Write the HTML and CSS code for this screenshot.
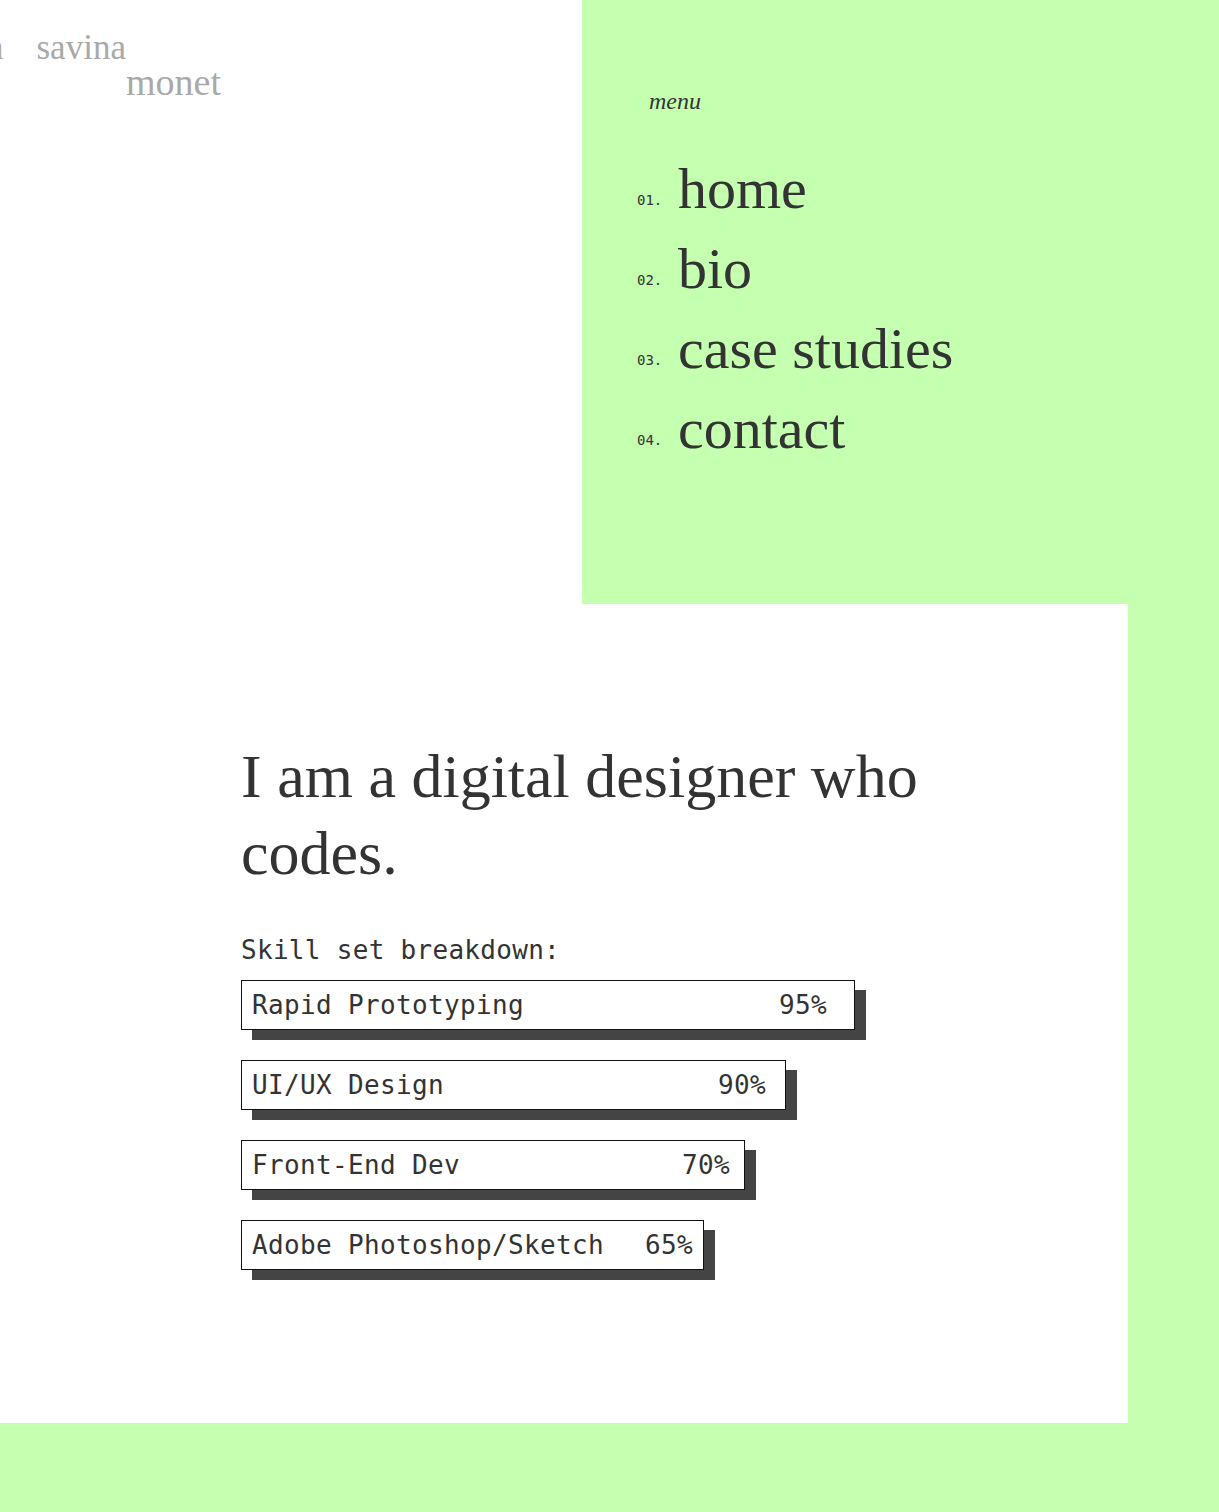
FILE: index.html
```html
<!DOCTYPE html>
<html lang="en">
<head>
<meta charset="utf-8">
<title>savina monet</title>
<link rel="stylesheet" href="styles.css">
</head>
<body>
<div class="page">
  <header class="top">
    <div class="brand">
      <div class="logo">
        <span class="logo-cut">n</span><span class="logo-first">savina</span>
        <span class="logo-last">monet</span>
      </div>
    </div>
    <nav class="menu">
      <div class="menu-label">menu</div>
      <ul class="menu-list">
        <li class="menu-item"><span class="num">01.</span><a class="link" href="#">home</a></li>
        <li class="menu-item"><span class="num">02.</span><a class="link" href="#">bio</a></li>
        <li class="menu-item"><span class="num">03.</span><a class="link" href="#">case studies</a></li>
        <li class="menu-item"><span class="num">04.</span><a class="link" href="#">contact</a></li>
      </ul>
    </nav>
  </header>
  <main class="about">
    <h1 class="headline">I am a digital designer who codes.</h1>
    <p class="skills-title">Skill set breakdown:</p>
    <ul class="skills">
      <li class="bar" style="width:614px;padding-right:27px"><span>Rapid Prototyping</span><span>95%</span></li>
      <li class="bar" style="width:545px;padding-right:19px"><span>UI/UX Design</span><span>90%</span></li>
      <li class="bar" style="width:504px;padding-right:14px"><span>Front-End Dev</span><span>70%</span></li>
      <li class="bar" style="width:463px;padding-right:10px"><span>Adobe Photoshop/Sketch</span><span>65%</span></li>
    </ul>
  </main>
  <footer class="bottom"></footer>
</div>
</body>
</html>
```
FILE: styles.css
```css
* { box-sizing: border-box; }
html, body { margin: 0; padding: 0; }
body {
  background: #c5ffb0;
  color: #333;
  font-family: "Liberation Serif", serif;
}
.page { width: 1219px; }
.top {
  display: flex;
  height: 604px;
}
.brand {
  width: 582px;
  background: #fff;
  overflow: hidden;
}
.logo {
  padding-top: 31px;
  font-family: "Liberation Serif", serif;
  color: #a9a9a9;
  font-size: 35px;
  line-height: 34px;
}
.logo-cut { margin-left: -14px; margin-right: 33px; }
.logo-first { display: inline-block; }
.logo-last { display: block; padding-left: 126px; font-size: 38px; }
.menu {
  flex: 1;
  padding: 86px 0 0 55px;
}
.menu-label {
  font-style: italic;
  font-size: 24px;
  line-height: 30px;
  margin: 0 0 33px 12px;
  color: #333;
}
.menu-list {
  list-style: none;
  margin: 0;
  padding: 0;
}
.menu-item {
  display: flex;
  align-items: baseline;
  height: 80px;
  line-height: 80px;
}
.num {
  font-family: "DejaVu Sans Mono", monospace;
  font-size: 14px;
  width: 41px;
  color: #333;
  position: relative;
  top: -3px;
}
.link {
  font-size: 58px;
  color: #333;
  text-decoration: none;
}
.about {
  width: 1128px;
  height: 819px;
  background: #fff;
  padding: 134px 0 0 241px;
}
.headline {
  margin: 0;
  font-weight: normal;
  font-size: 62px;
  line-height: 77px;
  width: 700px;
  color: #333;
}
.skills-title {
  margin: 43px 0 15px;
  font-family: "DejaVu Sans Mono", monospace;
  font-size: 26px;
  line-height: 30px;
  letter-spacing: 0.3px;
  color: #333;
}
.skills {
  list-style: none;
  margin: 0;
  padding: 0;
}
.bar {
  display: flex;
  justify-content: space-between;
  height: 50px;
  line-height: 48px;
  padding-left: 10px;
  margin-bottom: 30px;
  background: #fff;
  border: 1px solid #111;
  box-shadow: 11px 10px 0 #444;
  font-family: "DejaVu Sans Mono", monospace;
  font-size: 26px;
  letter-spacing: 0.35px;
  color: #333;
}
.bottom { height: 89px; }
```
